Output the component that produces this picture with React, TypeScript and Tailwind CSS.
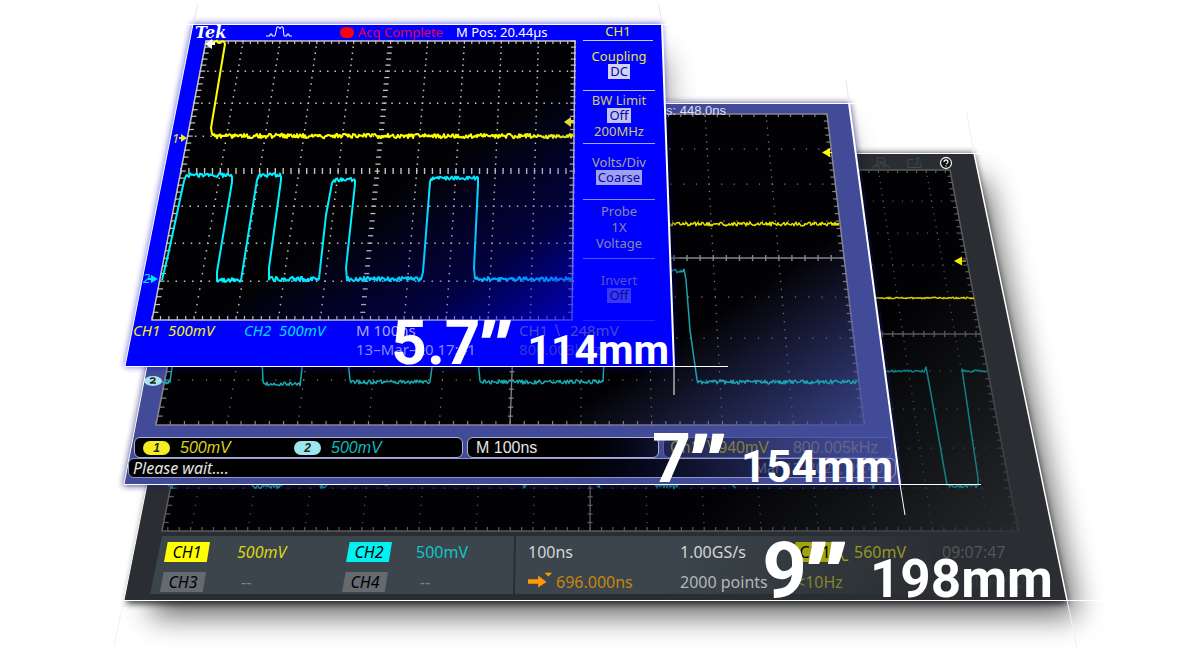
import type { ReactNode } from 'react';

type Point = [number, number];

interface PlotProps {
  top: [number, number];
  bottom: [number, number];
  rows: number[];
  columns: number[];
  color: string;
  dot?: number;
  solidAxes?: boolean;
}

const noisy = (x1: number, x2: number, y: number, amp: number, step = 1): Point[] => {
  const points: Point[] = [];
  for (let x = x1; x <= x2; x += step) {
    const r = Math.sin(x * 12.9898 + y * 78.233) * 43758.5453;
    points.push([x, y + (r - Math.floor(r) - 0.5) * 2 * amp]);
  }
  return points;
};

const path = (points: Point[]) => points.map(([x, y]) => `${x.toFixed(1)},${y.toFixed(1)}`).join(' ');

const tenths = [0, 0.1, 0.2, 0.3, 0.4, 0.5, 0.6, 0.7, 0.8, 0.9, 1];
const fifteenths = [0, 1, 2, 3, 4, 5, 6, 7, 8, 9, 10, 11, 12, 13, 14].map((i) => (i + 0.5) / 15);

function Plot({ top, bottom, rows, columns, color, dot = 1.2, solidAxes }: PlotProps) {
  const y0 = rows[0];
  const y1 = rows[rows.length - 1];
  const at = (u: number, y: number) => {
    const t = (y - y0) / (y1 - y0);
    const left = top[0] + (bottom[0] - top[0]) * t;
    const right = top[1] + (bottom[1] - top[1]) * t;
    return left + (right - left) * u;
  };
  const mid = rows[(rows.length - 1) / 2];
  const sub = (columns[1] - columns[0]) / 5;
  const ticks: number[] = [];
  for (let u = columns[0] - 5 * sub; u <= 1.001; u += sub) {
    if (u >= 0) ticks.push(u);
  }
  const fine: number[] = [];
  rows.slice(0, -1).forEach((y, i) => {
    for (let k = 0; k < 5; k++) fine.push(y + ((rows[i + 1] - y) * k) / 5);
  });

  return (
    <g fill={color} stroke="none">
      <polygon
        points={`${top[0]},${y0} ${top[1]},${y0} ${bottom[1]},${y1} ${bottom[0]},${y1}`}
        fill="#020204"
        stroke={color}
        strokeWidth="1.5"
      />
      {rows.slice(1, -1).map((y) =>
        ticks.map((u) =>
          y === mid ? (
            <rect key={`${y}-${u}`} x={at(u, y) - 0.5} y={y - 3} width="1.4" height="6" />
          ) : (
            <rect key={`${y}-${u}`} x={at(u, y) - 0.5} y={y - 0.5} width={dot} height={dot} />
          ),
        ),
      )}
      {columns.map((u) =>
        fine.map((y) =>
          Math.abs(u - 0.5) < 0.001 ? (
            <rect key={`${u}-${y}`} x={at(u, y) - 2.5} y={y - 0.5} width="5" height="1.3" />
          ) : (
            <rect key={`${u}-${y}`} x={at(u, y) - 0.5} y={y - 0.5} width={dot} height={dot} />
          ),
        ),
      )}
      {ticks.map((u) => (
        <g key={u}>
          <rect x={at(u, y0) - 0.5} y={y0} width="1.2" height="3" />
          <rect x={at(u, y1) - 0.5} y={y1 - 4} width="1.2" height="4" />
        </g>
      ))}
      {fine.map((y) => (
        <g key={y}>
          <rect x={at(0, y)} y={y - 0.5} width="5" height="1.2" />
          <rect x={at(1, y) - 4} y={y - 0.5} width="4" height="1.2" />
        </g>
      ))}
      {solidAxes && (
        <g stroke={color} strokeWidth="1.3">
          <line x1={at(0, mid)} y1={mid} x2={at(1, mid)} y2={mid} />
          <line x1={at(0.5, y0)} y1={y0} x2={at(0.5, y1)} y2={y1} />
        </g>
      )}
    </g>
  );
}

function Trace({ points, color, width = 1.5 }: { points: Point[]; color: string; width?: number }) {
  return (
    <polyline points={path(points)} fill="none" stroke={color} strokeWidth={width} strokeLinejoin="round" />
  );
}

function Size({ children, className }: { children: ReactNode; className: string }) {
  return (
    <figcaption
      className={`absolute flex items-baseline font-[Roboto,sans-serif] leading-none font-bold whitespace-nowrap text-white ${className}`}
    >
      {children}
    </figcaption>
  );
}

function Quote() {
  return <span className="font-['Open_Sans',sans-serif] leading-none font-extrabold">”</span>;
}

const chip = 'w-[46px] text-center leading-5 text-black [clip-path:polygon(8%_0,100%_0,93%_100%,0_100%)]';

function LargeScreen() {
  return (
    <figure className="absolute top-[153px] left-[124px] flex h-[447px] w-[943px] flex-col font-['Noto_Sans',sans-serif] text-base">
      <svg viewBox="124 153 943 447" className="absolute inset-0 size-full overflow-visible" aria-hidden="true">
        <defs>
          <filter id="soft-large" x="-20%" y="-20%" width="140%" height="140%">
            <feGaussianBlur stdDeviation="15" />
          </filter>
          <filter id="edge-large">
            <feGaussianBlur stdDeviation="3" />
          </filter>
          <linearGradient id="fade-large" gradientUnits="userSpaceOnUse" x1="830" y1="380" x2="1010" y2="560">
            <stop offset="0" stopColor="#2a2d31" stopOpacity="0" />
            <stop offset="1" stopColor="#2a2d31" stopOpacity="0.92" />
          </linearGradient>
          <linearGradient id="panel-large" gradientUnits="userSpaceOnUse" x1="700" y1="500" x2="900" y2="590">
            <stop offset="0" stopColor="#3b454b" />
            <stop offset="1" stopColor="#2c3034" />
          </linearGradient>
        </defs>
        <polygon points="215,180 985,180 1078,616 150,616" fill="#000" opacity="0.6" filter="url(#soft-large)" />
        <polygon points="213,153 974,153 1068,604 126,604" fill="#000" opacity="0.7" filter="url(#edge-large)" />
        <polygon points="213,153 974,153 1067,600 124,600" fill="#2a2d31" />
        <polygon points="162,536 514,536 513,594 150,594" fill="#3b454b" />
        <polygon points="516,536 927,536 937,594 515,594" fill="url(#panel-large)" />
        <Plot
          top={[233, 950]}
          bottom={[162, 1018]}
          rows={[170, 201, 233, 265, 298, 334, 371, 409, 448, 488, 531]}
          columns={fifteenths}
          color="#5c5c5e"
          solidAxes
        />
        <polygon points="233,170 951,169 1019,532 162,532" fill="url(#fade-large)" />
        <Trace points={noisy(870, 974, 298, 0.8)} color="#d4cf00" />
        <path d="M954 261l8-4.500v9zM960 260.500h6v1h-6z" fill="#f0ec00" />
        <Trace
          points={[
            ...noisy(880, 924, 371, 1),
            [926, 367],
            [931, 394],
            [947, 485],
            ...noisy(948, 978, 486, 1.5),
            [978, 478],
            [970, 424],
            [962, 369],
            ...noisy(963, 987, 371, 1),
          ]}
          color="#108088"
        />
        {[[165, 176], [250, 282], [320, 327], [384, 387], [522, 526], [597, 600], [655, 680], [732, 735], [872, 875]].map(
          ([a, b]) => (
            <Trace key={a} points={noisy(a, b, 486, 2.500)} color="#14a9ad" />
          ),
        )}
        <g stroke="#3f494e" fill="none">
          <path d="M877 158h8v4h-8zM873 166h6v4h-6zM883 166h6v4h-6zM881 162v2M876 166v-2h10v2" />
          <path d="M913 159.500h-5v8h13v-6M914 164.500q2-1 4-1v-6M915.500 160l2.500-3 2.500 3" />
        </g>
        <circle cx="946" cy="163" r="5.500" fill="#111" stroke="#e8e8e8" strokeWidth="1.3" />
        <path d="M944 162q0-2 2-2t2 2q0 1-2 2M946 165.500v1" fill="none" stroke="#eee" strokeWidth="1.300" />
        <g stroke="#fff">
          <path d="M213 153.500H992M110 600.500H1110M213 153L124 600" fill="none" />
          <path d="M974 153L1067 600" strokeWidth="1.5" />
          <path d="M966 110L974 153M1067 600L1077 648M124 600L114 645" stroke="#f0f0fc" />
        </g>
      </svg>
      <div className="relative mt-auto mb-2 grid grid-cols-[73px_109px_70px_112px_152px_112px_62px_88px_1fr] items-center gap-y-[10px] pl-[40px] leading-5 whitespace-nowrap text-[#d2d6d8]">
        <span className={`${chip} bg-[#ffff00] italic`}>CH1</span>
        <span className="text-[#d9d615] italic">500mV</span>
        <span className={`${chip} bg-[#00f2f2] italic`}>CH2</span>
        <span className="text-[#10c3c8]">500mV</span>
        <span>100ns</span>
        <span>1.00GS/s</span>
        <span className={`${chip} bg-[#a3a20f]`}>CH1</span>
        <span className="relative text-[#96952a]">
          <svg viewBox="0 0 16 18" className="absolute top-1 -left-5 h-4 w-4" aria-hidden="true">
            <path d="M0 1h3l7 15h5" fill="none" stroke="#a3a20f" strokeWidth="1.5" />
          </svg>
          560mV
        </span>
        <span className="text-[#50565a]">09:07:47</span>
        <span className={`${chip} -ml-1 bg-[#646a70] italic`}>CH3</span>
        <span className="pl-1 text-[#7c858a]">--</span>
        <span className={`${chip} -ml-1 bg-[#646a70] italic`}>CH4</span>
        <span className="pl-1 text-[#7c858a]">--</span>
        <span className="flex items-center gap-1 text-[#c8860d]">
          <svg viewBox="0 0 26 20" className="h-5 w-6" aria-hidden="true">
            <path d="M0 7h11V3l9 7-9 6v-4H0zM18 0h8l-4 4z" fill="#ff9b00" />
          </svg>
          696.000ns
        </span>
        <span className="text-[#b2b6b9]">2000 points</span>
        <span className="pl-1 text-[#84832d]">&lt;10Hz</span>
        <span />
        <span className="text-[#34393d]">13 Mar 2020</span>
      </div>
      <Size className="right-[14px] bottom-[-10px] gap-6 text-[53px]">
        <span className="text-[78px]">
          9<Quote />
        </span>
        198mm
      </Size>
    </figure>
  );
}

const bar = 'flex h-[21px] items-center rounded-md border border-[#aeb2d6]';
const pill = 'w-[27px] rounded-full text-center text-xs leading-[14px] font-bold text-[#252525] italic';

function MediumScreen() {
  return (
    <figure className="absolute top-[103px] left-[124px] flex h-[381px] w-[776px] flex-col font-['Liberation_Sans',sans-serif] text-base leading-none">
      <svg viewBox="124 103 776 381" className="absolute inset-0 size-full overflow-visible" aria-hidden="true">
        <defs>
          <filter id="soft-medium" x="-20%" y="-20%" width="140%" height="140%">
            <feGaussianBlur stdDeviation="15" />
          </filter>
          <filter id="edge-medium">
            <feGaussianBlur stdDeviation="3" />
          </filter>
          <linearGradient id="fade-medium" gradientUnits="userSpaceOnUse" x1="705" y1="323" x2="805" y2="471">
            <stop offset="0" stopColor="#414b98" stopOpacity="0" />
            <stop offset="1" stopColor="#414b98" stopOpacity="0.9" />
          </linearGradient>
        </defs>
        <polygon points="215,125 845,125 870,300 180,400" fill="#000" opacity="0.35" filter="url(#soft-medium)" />
        <polygon points="198,103 850,103 901,486 123,486" fill="#1c1f70" opacity="0.8" filter="url(#edge-medium)" />
        <polygon points="198,103 849,103 900,484 124,484" fill="#414b98" />
        <Plot
          top={[217, 827]}
          bottom={[156, 864]}
          rows={[114, 149, 184, 221, 258, 297, 338, 380, 425]}
          columns={tenths}
          color="#88848e"
          solidAxes
        />
        <polygon points="217,114 828,113 865,426 156,426" fill="url(#fade-medium)" />
        <Trace points={noisy(660, 839, 224, 2)} color="#e8e200" />
        <path d="M822 152.500l8-4.500v9zM828 152h4v1.200h-4z" fill="#ffff00" />
        <Trace
          points={[
            ...noisy(668, 684, 271, 2),
            [686, 280],
            [690, 330],
            [697, 380],
            ...noisy(698, 857, 382, 2),
          ]}
          color="#18a4b4"
        />
        <Trace points={[...noisy(162, 170, 382, 2), [173, 360]]} color="#15abb0" />
        <Trace points={[[262, 360], [263, 381], ...noisy(264, 300, 384, 2), [303, 360]]} color="#15abb0" />
        <Trace points={[[348, 360], [350, 380], ...noisy(351, 430, 382, 2), [433, 360]]} color="#15abb0" />
        <Trace points={[[478, 360], [480, 381], ...noisy(481, 603, 382, 2), [604, 360]]} color="#15abb0" />
        <ellipse cx="153" cy="381" rx="9" ry="5" fill="#a6e5ee" />
        <path d="M150 379q3-2 5 0 0 2-5 4h6" fill="none" stroke="#222" strokeWidth="1.500" />
        <g stroke="#fff">
          <path d="M124 484.500H981M198 103.500H862" />
          <path d="M198 103L124 484" fill="none" />
          <path d="M849 103L900 484" strokeWidth="2" />
          <path d="M900 484L905 515" />
          <path d="M846 80L849 103" stroke="#e4e4fa" />
        </g>
      </svg>
      <div className="relative pt-px pl-[542px] text-[13px] text-[#dddff0]">s: 448.0ns</div>
      <div className="relative mt-auto flex gap-1 pr-2 pl-[10px] whitespace-nowrap text-[#e4e4e4]">
        <div className={`${bar} w-[329px] gap-[10px] bg-black pl-2`}>
          <span className={`${pill} bg-[#f4ee20]`}>1</span>
          <span className="w-[104px] text-[#d8d21c] italic">500mV</span>
          <span className={`${pill} bg-[#9ee6ee]`}>2</span>
          <span className="text-[#10b9bf] italic">500mV</span>
        </div>
        <div className={`${bar} w-[192px] bg-linear-to-r from-black from-50% to-[#10132e] pl-2`}>M 100ns</div>
        <div className="flex h-[21px] flex-1 items-center gap-6 rounded-md border border-[#555da3] bg-linear-to-r from-[#20254c] to-[#3d468f] to-80% pl-[6px]">
          <span className="text-[#82803a]">Ch1 ∖ 940mV</span>
          <span className="text-[#626682]">800.005kHz</span>
        </div>
      </div>
      <div className="relative mx-1 mb-[6px] flex h-5 items-center justify-between rounded-md border border-[#8f95c8] bg-linear-to-r from-black from-50% to-[#3d468f] pr-3 pl-1 font-['Noto_Sans',sans-serif] text-base text-[#e4e4e4]">
        <span className="italic">Please wait....</span>
        <span className="text-sm text-[#565d92]">Mar 13, 2020, 09:40</span>
      </div>
      <Size className="right-[7px] bottom-[-9px] gap-4 text-[44px]">
        <span className="text-[68px]">
          7<Quote />
        </span>
        154mm
      </Size>
    </figure>
  );
}

const menu = [
  { label: 'Coupling', value: 'DC', note: '', size: 'h-[50px]', tone: 'text-[#e6e640] border-[#b9b9f8]', box: 'bg-[#d2d2f4]' },
  { label: 'BW Limit', value: 'Off', note: '200MHz', size: 'h-[53px]', tone: 'text-[#cccc68] border-[#a6a6f6]', box: 'bg-[#c2c2f2]' },
  { label: 'Volts/Div', value: 'Coarse', note: '', size: 'h-[56px]', tone: 'text-[#a8a888] border-[#8c8cf4]', box: 'bg-[#a0a0f0]' },
  { label: 'Probe', value: '', note: '1X Voltage', size: 'h-[59px]', tone: 'text-[#8888a4] border-[#5555f6]', box: '' },
  { label: 'Invert', value: 'Off', note: '', size: 'h-[62px]', tone: 'text-[#5555bd] border-[#2424fa]', box: 'bg-[#3838f6]' },
];

function SmallScreen() {
  return (
    <figure className="absolute top-[24px] left-[125px] flex h-[342px] w-[549px] flex-col font-['Noto_Sans',sans-serif] text-[13px] leading-4 whitespace-pre">
      <svg viewBox="125 24 549 342" className="absolute inset-0 size-full overflow-visible" aria-hidden="true">
        <defs>
          <filter id="soft-small" x="-20%" y="-20%" width="140%" height="140%">
            <feGaussianBlur stdDeviation="15" />
          </filter>
          <filter id="edge-small">
            <feGaussianBlur stdDeviation="3" />
          </filter>
          <linearGradient id="fade-small" gradientUnits="userSpaceOnUse" x1="410" y1="180" x2="540" y2="375">
            <stop offset="0" stopColor="#0000ff" stopOpacity="0" />
            <stop offset="0.5" stopColor="#0000ff" stopOpacity="0.24" />
            <stop offset="1" stopColor="#0000ff" stopOpacity="0.85" />
          </linearGradient>
          <clipPath id="above-medium">
            <path d="M0 0H1190V101H665L690 366H0z" />
          </clipPath>
        </defs>
        <g clipPath="url(#above-medium)">
          <polygon points="215,55 665,55 680,300 200,200" fill="#000" opacity="0.4" filter="url(#soft-small)" />
        </g>
        <polygon points="192,23 662,23 675,367 124,367" fill="#0000c8" opacity="0.55" filter="url(#edge-small)" />
        <polygon points="193,24 662,24 674,366 125,366" fill="#0000ff" />
        <Plot
          top={[206, 575]}
          bottom={[152, 572]}
          rows={[41, 71, 103, 136, 171, 206, 243, 281, 320]}
          columns={tenths}
          color="#c3c3c3"
          dot={1.5}
        />
        <Trace
          points={[
            ...noisy(210, 224, 42, 1.500),
            [225, 44],
            [211, 128],
            [212, 134],
            ...noisy(213, 573, 136, 2.200),
          ]}
          color="#ffff00"
          width={2}
        />
        <path d="M564 122l7-5v3h3v3h-3v4zM187 138l-6-4v3h-2v2h2v3z" fill="#f2ee20" />
        <path d="M158 279l-7-4v3h-3v2h3v3z" fill="#00e8f8" />
        <path d="M205 44l7-5v3h3v3h-3v4z" fill="#fff" />
        <Trace
          points={[
            [162, 280],
            [168, 255],
            [184, 181],
            ...noisy(186, 232, 175, 2),
            [232, 182],
            [217, 272],
            ...noisy(217, 241, 280, 2),
            [248, 236],
            [257, 180],
            ...noisy(259, 281, 175, 2),
            [281, 180],
            [269, 268],
            ...noisy(269, 319, 279, 2.200),
            [326, 215],
            [332, 183],
            ...noisy(334, 355, 180, 2),
            [355, 184],
            [346, 268],
            ...noisy(347, 421, 279, 2.200),
            [423, 272],
            [430, 182],
            ...noisy(431, 478, 178, 2),
            [478, 185],
            [474, 268],
            ...noisy(475, 572, 279, 2),
          ]}
          color="#00f2ff"
          width={2}
        />
        <polygon points="206,41 576,40 573,321 152,320" fill="url(#fade-small)" />
        <path d="M266 36h4v-2h2v2h3l2-9h2l1 2 1-2h2l1 9h3v-2h2v2h3" fill="none" stroke="#fff" />
        <g stroke="#fff">
          <path d="M193 24L125 366" />
          <path d="M180 24.500H675M125 366.500H728" />
          <path d="M662 24L674 366" strokeWidth="2" />
          <path d="M674 366V395" />
          <path d="M198 5L193 24M659 5L662 24" stroke="#e0e0fa" />
        </g>
      </svg>
      <div className="relative flex h-[17px] items-center leading-none">
        <span className="ml-[70px] w-[145px] font-['DejaVu_Serif',serif] text-base font-bold text-white italic">Tek</span>
        <span className="mr-1 h-[11px] w-[14px] rounded-full bg-[#fa0010]" />
        <span className="w-[98px] text-[#e8003c]">Acq Complete</span>
        <span className="text-white">M Pos: 20.44µs</span>
        <span className="mr-[21px] ml-auto w-[70px] border-b border-[#c8c8fa] pb-[2px] text-center text-[#e8e832]">CH1</span>
      </div>
      <div className="relative flex flex-1">
        <div className="flex-1">
          <div className="pt-[89px] pl-[47px] text-[#e4e432] italic">1</div>
          <div className="pt-[124px] pl-[18px] text-[#00e0f4] italic">2</div>
        </div>
        <div className="mr-[19px] w-[72px] text-center">
          {menu.map(({ label, value, note, size, tone, box }) => (
            <div key={label} className={`flex flex-col items-center justify-center border-b pb-1 ${size} ${tone}`}>
              <span>{label}</span>
              {value && <span className={`px-[2px] leading-[15px] text-[#0808a0] ${box}`}>{value}</span>}
              {note && <span className="whitespace-pre-line">{note.replace(' ', '\n')}</span>}
            </div>
          ))}
        </div>
      </div>
      <div className="relative grid h-[44px] grid-cols-[111px_112px_163px_1fr] content-start gap-y-[3px] pl-[8px] text-[15px]">
        <span className="text-[#f0f020] italic">CH1  500mV</span>
        <span className="text-[#00dcf5] italic">CH2  500mV</span>
        <span className="text-[#a8a8f8]">M 100ns</span>
        <span className="text-[#4848cc]">CH1 ∖  248mV</span>
        <span className="col-start-3 text-[#8888fa]">13–Mar–20 17:41</span>
        <span className="text-[#3535cf]">800.003kHz</span>
      </div>
      <Size className="right-[5px] bottom-[-8px] gap-4 text-[41px]">
        <span className="text-[62px]">
          5.7<Quote />
        </span>
        114mm
      </Size>
    </figure>
  );
}

export default function App() {
  return (
    <main className="min-h-screen overflow-hidden bg-white">
      <div className="relative mx-auto min-h-[656px] w-full max-w-[1190px]">
        <LargeScreen />
        <MediumScreen />
        <SmallScreen />
      </div>
    </main>
  );
}
